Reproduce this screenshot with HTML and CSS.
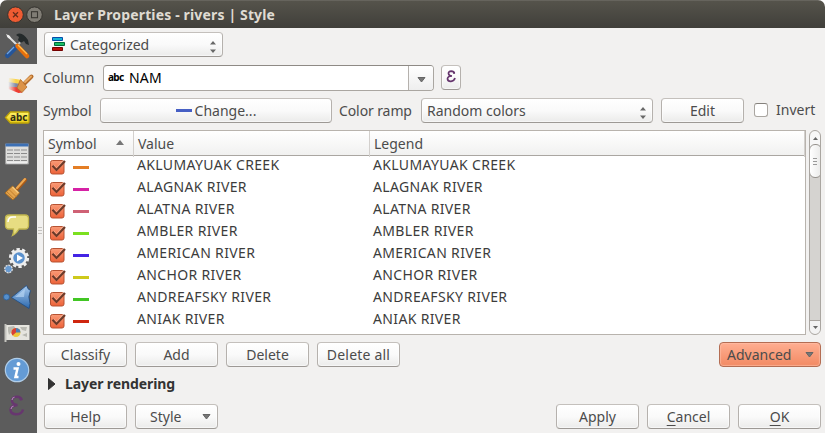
FILE: index.html
```html
<!DOCTYPE html>
<html lang="en">
<head>
<meta charset="utf-8">
<title>Layer Properties - rivers | Style</title>
<link rel="stylesheet" href="styles.css">
</head>
<body>
<svg class="defs" width="0" height="0">
  <defs>
    <linearGradient id="org" x1="0" y1="0" x2="0" y2="1"><stop offset="0" stop-color="#f99b78"/><stop offset="1" stop-color="#ed6238"/></linearGradient>
    <linearGradient id="blu" x1="0" y1="0" x2="0" y2="1"><stop offset="0" stop-color="#a9cbef"/><stop offset="1" stop-color="#2c68ad"/></linearGradient>
    <linearGradient id="yel" x1="0" y1="0" x2="0" y2="1"><stop offset="0" stop-color="#fff36c"/><stop offset="1" stop-color="#e9cb16"/></linearGradient>
    <linearGradient id="fade" x1="0" y1="0" x2="1" y2="0"><stop offset="0" stop-color="#f2f1f0"/><stop offset="1" stop-color="#f2f1f0" stop-opacity="0"/></linearGradient>
    <symbol id="check" viewBox="0 0 18 16">
      <rect x="1.5" y="1.500" width="13.500" height="13.500" rx="2" fill="url(#org)" stroke="#b65333"/>
      <path d="M4 6.500l3.500 4 7.500-8.500" fill="none" stroke="#ffc4aa" stroke-width="3" opacity=".5"/>
      <path d="M3.500 6.700l4 4.300 8.500-9" fill="none" stroke="#6b3a29" stroke-width="2.200"/>
    </symbol>
    <symbol id="updown" viewBox="0 0 6 12"><path d="M0 3.500L3 0l3 3.500zM0 8.500h6L3 12z" fill="#686868"/></symbol>
    <symbol id="down" viewBox="0 0 9 6"><path d="M1 .5h7L4.500 5z" fill="#777" stroke="#656565"/></symbol>
  </defs>
</svg>
<div class="window">
  <header class="titlebar">
    <svg class="controls" width="40" height="20" viewBox="0 0 40 20">
      <circle cx="10.500" cy="9.700" r="7.800" fill="#ee5b32" stroke="#35332e"/>
      <path d="M8 7.200l5 5M13 7.200l-5 5" stroke="#642c1a" stroke-width="1.300"/>
      <circle cx="29.500" cy="9.700" r="7.800" fill="#807d75" stroke="#35332e"/>
      <rect x="26.500" y="6.700" width="6" height="6" fill="none" stroke="#393732" stroke-width="1.100"/>
    </svg>
    <h1>Layer Properties - rivers | Style</h1>
  </header>
  <div class="body">
    <nav class="sidebar">
      <div class="tab"><svg viewBox="0 0 37 36">
        <path d="M7.500 7.500L20 20" stroke="#dedede" stroke-width="2"/><path d="M6 6l4 2 1 3-3-1z" fill="#eee"/>
        <path d="M16 19L7.500 27.500" stroke="#24559a" stroke-width="5" stroke-linecap="round"/><path d="M14 19l-7 7" stroke="#75a4dc" stroke-width="1.200"/>
        <path d="M17.500 17l5-5" stroke="#c7c7c7" stroke-width="2"/>
        <path d="M16 7c4-3 8-1 12 5l1 5-3-1-2-3-3 2-3-3 1-3z" fill="#242a2b"/>
        <path d="M17.500 18l9.500 10" stroke="#e66f0c" stroke-width="4.500" stroke-linecap="round"/><path d="M18 17l9 9" stroke="#ffc052" stroke-width="1.300"/>
      </svg></div>
      <div class="tab active"><svg viewBox="0 0 37 36">
        <path d="M9 14l13 2-2 5-12-2z" fill="#fbd344"/><path d="M8.500 18l12 2-3 5-9-2z" fill="#8089a5"/><path d="M8.500 22.500l11 1 3 5-4 .5-10-4z" fill="#ee3d32"/>
        <path d="M8 13h8v16H8z" fill="url(#fade)"/>
        <path d="M25 19l6.500-6.500" stroke="#b66d2c" stroke-width="4" stroke-linecap="round"/><path d="M25 18l6-5.500" stroke="#e9aa63" stroke-width="2" stroke-linecap="round"/>
        <path d="M20.500 15.500l6.500 7.500-5 5.500-5-4.500z" fill="#dc9348" stroke="#b46c2b" stroke-width=".8"/>
      </svg></div>
      <div class="tab"><svg viewBox="0 0 37 36">
        <path d="M10.500 12h17.500q1 0 1 1v9q0 1-1 1H10.500l-5-5.500z" fill="url(#yel)" stroke="#c0a506" stroke-width="1.300"/>
        <text x="10" y="21" class="abc-tag">abc</text>
      </svg></div>
      <div class="tab"><svg viewBox="0 0 37 36">
        <path d="M5.500 8h23v20h-23z" fill="#dededc" stroke="#999"/><path d="M5.500 7.500h23v3h-23z" fill="#3c70b5"/>
        <path d="M7 14h20M7 17.500h20M7 21h20M7 24.500h20" stroke="#8b8b8b" stroke-width="1.200" stroke-dasharray="6 1"/>
        <path d="M7 26.500h20" stroke="#eee" stroke-width="2"/>
      </svg></div>
      <div class="tab"><svg viewBox="0 0 37 36">
        <path d="M17 17l8-9" stroke="#a95a18" stroke-width="4" stroke-linecap="round"/><path d="M17 16l8-9" stroke="#eda953" stroke-width="2" stroke-linecap="round"/>
        <path d="M12.500 14l7 7-6.500 7-8-7z" fill="#e3a44d" stroke="#a66a20"/><path d="M7 20l7 6.500M9.500 18l7 7" stroke="#bf7e2e"/><path d="M12.500 15l6 6" stroke="#f5ca80" stroke-width="1.500"/>
      </svg></div>
      <div class="tab"><svg viewBox="0 0 37 36">
        <path d="M9 7h16q3.500 0 3.500 3.500v7q0 3.500-3.500 3.500h-6q-3 5-6.500 6.500 1.500-3 1-6.500H9q-3.500 0-3.500-3.500v-7Q5.500 7 9 7z" fill="#e7dd82" stroke="#c1b64e" stroke-width="1.300"/>
        <path d="M8 14q0-5 5-5h3" fill="none" stroke="#fff" stroke-width="1.500"/>
      </svg></div>
      <div class="tab"><svg viewBox="0 0 37 36">
        <circle cx="19" cy="14" r="8.800" fill="none" stroke="#eee" stroke-width="2.600" stroke-dasharray="3.300 2.230"/>
        <circle cx="19" cy="14" r="7" fill="#5b91cd" stroke="#eee" stroke-width="2.500"/><path d="M17 10.500l6 3.500-6 3.500z" fill="#fff"/>
        <circle cx="8.500" cy="25" r="3.700" fill="#5b91cd" stroke="#ddd" stroke-width="1.500" stroke-dasharray="2 .8"/><circle cx="8.500" cy="25" r="2.800" fill="#699bd1"/>
      </svg></div>
      <div class="tab"><svg viewBox="0 0 37 36">
        <path d="M11.500 17.500l15-12q1 4 4 5-3 6-.500 13l-1 5z" fill="url(#blu)" stroke="#1d4d86" stroke-width=".8"/><path d="M15 17l10-8-1 8z" fill="#bad7f4" opacity=".65"/>
        <circle cx="6.500" cy="17" r="3" fill="#568fcb" stroke="#285d9a" stroke-width=".8"/>
      </svg></div>
      <div class="tab"><svg viewBox="0 0 37 36">
        <path d="M5.500 9h24v15h-24z" fill="#e6e5df"/><path d="M8 11l6-1 2 3-4 2-3 4-1-4zM20 11l7 0-1 4-4-1zM22 19l5-2 0 4z" fill="#b9b9b2"/>
        <path d="M5.500 8v18" stroke="#c5c4bf" stroke-width="2"/>
        <circle cx="16" cy="16.500" r="4.500" fill="#edc63b"/><path d="M16 16.500V12a4.500 4.500 0 0 0-3.500 7.500z" fill="#d84037"/><path d="M16 16.500V12a4.500 4.500 0 0 1 4.500 4.500z" fill="#4d7db5"/>
      </svg></div>
      <div class="tab"><svg viewBox="0 0 37 36">
        <circle cx="17" cy="18" r="11.700" fill="#649bd5" stroke="#b1cee9" stroke-width="1.200"/>
        <circle cx="18.500" cy="12" r="2" fill="#fff"/><path d="M13.500 16.500h4l-2 8.500h3" fill="none" stroke="#fff" stroke-width="2.500"/>
      </svg></div>
      <div class="tab"><svg viewBox="0 0 37 36">
        <path d="M21.500 12q-1-3.500-5-3.200-5 .5-4.500 4.200.5 3.500 5.500 4-7 .5-7 5 .5 4.500 6.500 4.200 5-.2 6-4.700" fill="none" stroke="#67366f" stroke-width="2.400"/>
        <circle cx="21" cy="11" r="1.600" fill="#67366f"/><path d="M12 12q.5-2.500 2.500-3M11 21q.5-2.500 2.500-3" fill="none" stroke="#b18ab6" stroke-width="1.200"/>
      </svg></div>
    </nav>
    <main class="content">
      <div class="splitter"><i></i><i></i><i></i></div>
      <div class="row">
        <div class="btn combo renderer">
          <svg width="14" height="15" viewBox="0 0 14 15"><g stroke-width="1"><path d="M.500.500h10v3H.500z" fill="#13b3d5" stroke="#074aa9"/><path d="M2.500 5.500h10v3h-10z" fill="#18bd63" stroke="#006638"/><path d="M.500 10.500h10v3H.500z" fill="#bd0c07" stroke="#740000"/></g></svg>
          <span>Categorized</span><svg class="ud"><use href="#updown"/></svg>
        </div>
      </div>
      <div class="row column-row">
        <label>Column</label>
        <div class="field"><b>abc</b><span>NAM</span><div class="drop"><svg class="dn"><use href="#down"/></svg></div></div>
        <div class="btn expr"><svg width="12" height="15" viewBox="0 0 12 15"><path d="M9.300 4.500Q9 2.100 6.300 2.100 3.300 2.300 3.500 4.600 3.800 6.800 7 7 2.500 7.200 2.500 9.800 2.800 12.500 6 12.300 9.200 12 10 9" fill="none" stroke="#66366e" stroke-width="1.700"/><circle cx="9" cy="3.800" r="1.100" fill="#66366e"/></svg></div>
      </div>
      <div class="row symbol-row">
        <label>Symbol</label>
        <div class="btn change"><i class="swatch"></i><span>Change...</span></div>
        <label class="ramp-label">Color ramp</label>
        <div class="btn combo ramp"><span>Random colors</span><svg class="ud"><use href="#updown"/></svg></div>
        <div class="btn edit">Edit</div>
        <div class="checkbox"></div><label class="invert">Invert</label>
      </div>
      <div class="table-area">
        <div class="table">
          <div class="thead"><div>Symbol<svg class="sort" viewBox="0 0 8 5"><path d="M0 5h8L4 0z" fill="#777"/></svg></div><div>Value</div><div>Legend</div></div>
          <div class="tr"><div><svg class="check"><use href="#check"/></svg><i class="swatch c1"></i></div><div>AKLUMAYUAK CREEK</div><div>AKLUMAYUAK CREEK</div></div>
          <div class="tr"><div><svg class="check"><use href="#check"/></svg><i class="swatch c2"></i></div><div>ALAGNAK RIVER</div><div>ALAGNAK RIVER</div></div>
          <div class="tr"><div><svg class="check"><use href="#check"/></svg><i class="swatch c3"></i></div><div>ALATNA RIVER</div><div>ALATNA RIVER</div></div>
          <div class="tr"><div><svg class="check"><use href="#check"/></svg><i class="swatch c4"></i></div><div>AMBLER RIVER</div><div>AMBLER RIVER</div></div>
          <div class="tr"><div><svg class="check"><use href="#check"/></svg><i class="swatch c5"></i></div><div>AMERICAN RIVER</div><div>AMERICAN RIVER</div></div>
          <div class="tr"><div><svg class="check"><use href="#check"/></svg><i class="swatch c6"></i></div><div>ANCHOR RIVER</div><div>ANCHOR RIVER</div></div>
          <div class="tr"><div><svg class="check"><use href="#check"/></svg><i class="swatch c7"></i></div><div>ANDREAFSKY RIVER</div><div>ANDREAFSKY RIVER</div></div>
          <div class="tr"><div><svg class="check"><use href="#check"/></svg><i class="swatch c8"></i></div><div>ANIAK RIVER</div><div>ANIAK RIVER</div></div>
        </div>
        <div class="scrollbar">
          <svg width="5" height="3" viewBox="0 0 5 3"><path d="M0 3h5L2.500 0z" fill="#666"/></svg>
          <div class="thumb"><i></i><i></i><i></i></div>
          <div class="end"><svg width="5" height="3" viewBox="0 0 5 3"><path d="M0 0h5L2.500 3z" fill="#666"/></svg></div>
        </div>
      </div>
      <div class="row actions">
        <div class="btn">Classify</div><div class="btn">Add</div><div class="btn">Delete</div><div class="btn wide">Delete all</div>
        <div class="btn menu advanced"><span>Advanced</span><svg class="dn"><use href="#down"/></svg></div>
      </div>
      <div class="group"><svg width="8" height="12" viewBox="0 0 8 12"><path d="M.500.500L7 6 .500 11.500z" fill="#333" stroke="#333"/></svg><b>Layer rendering</b></div>
      <div class="row actions">
        <div class="btn">Help</div><div class="btn menu"><span>Style</span><svg class="dn"><use href="#down"/></svg></div>
        <div class="btn apply">Apply</div><div class="btn"><span><u>C</u>ancel</span></div><div class="btn"><span><u>O</u>K</span></div>
      </div>
    </main>
  </div>
</div>
</body>
</html>
```
FILE: styles.css
```css
* { box-sizing: border-box; }
body { margin: 0; background: #fff; font: 14px/20px "Noto Sans", "Open Sans", sans-serif; color: #4c4c4c; }
.defs { position: absolute; }
.window { width: 825px; height: 433px; overflow: hidden; border-radius: 7px 7px 0 0; background: #f2f1f0; }
.titlebar { height: 28px; display: flex; align-items: center; padding-left: 5px; border-top: 1px solid #66645d; background: linear-gradient(#55534b, #403f3a); }
.controls { flex: none; }
h1 { margin: 0 0 0 9px; font-size: 14px; line-height: 20px; font-weight: 700; letter-spacing: .15px; color: #dfdbd2; white-space: pre; }
.body { display: flex; height: 405px; }
.sidebar { width: 37px; flex: none; background: #5c5c5c; }
.tab { height: 36px; }
.tab svg { display: block; width: 37px; height: 36px; }
.tab.active { background: #f2f1f0; }
.abc-tag { font: bold 10px "Noto Sans", sans-serif; fill: #2f2e18; }
.content { position: relative; flex: 1; padding: 4px 4px 4px 7px; min-width: 0; }
.splitter { position: absolute; left: 1px; top: 199px; width: 4px; display: grid; gap: 2px; }
.splitter i { height: 1px; background: #c5c3c0; }
.row { display: flex; align-items: center; height: 25px; }
.btn { width: 83px; height: 25px; flex: none; display: flex; align-items: center; justify-content: center; border: 1px solid #b5b1ad; border-top-color: #c4c0bc; border-bottom-color: #9d9995; border-radius: 4px; background: linear-gradient(#fff, #fafafa 50%, #ebebea); box-shadow: inset 0 0 1px 1px #fff9; white-space: nowrap; }
.combo { justify-content: flex-start; }
.combo .ud { margin-left: auto; margin-right: 6px; margin-top: 4px; }
.ud { width: 6px; height: 12px; }
.dn { width: 9px; height: 6px; }
.renderer { width: 179px; padding-left: 7px; }
.renderer span { margin-left: 4px; letter-spacing: 0; }
.column-row { margin-top: 8px; }
label { width: 59px; flex: none; margin-left: -1px; white-space: nowrap; }
.field { width: 331px; height: 26px; display: flex; align-items: center; margin-left: 1px; padding-left: 4px; border: 1px solid #aaa6a1; border-top-color: #8e8a85; border-radius: 4px; background: #fff; color: #000; overflow: hidden; }
.field b { width: 21px; font-size: 10px; letter-spacing: -.7px; position: relative; top: -1px; }
.field span { letter-spacing: .2px; }
.drop { margin-left: auto; width: 25px; height: 24px; display: flex; align-items: center; justify-content: center; border-left: 1px solid #b5b1ad; background: linear-gradient(#fff, #eee); }
.drop .dn { margin-top: 4px; }
.expr { width: 20px; margin-left: 7px; }
.expr svg { margin-top: -2px; }
.symbol-row { margin-top: 8px; }
.symbol-row > label:first-child { width: 57px; }
.change { width: 232px; gap: 3px; }
.swatch { display: block; width: 16px; height: 3px; flex: none; background: #465fc4; }
.ramp-label { width: 82px; margin-left: 7px; letter-spacing: -.1px; }
.ramp { width: 232px; padding-left: 5px; }
.edit { margin-left: 8px; }
.checkbox { width: 14px; height: 14px; flex: none; margin: -2px 8px 0 10px; border: 1px solid #aaa6a1; border-top-color: #85817c; border-radius: 3px; background: #fff; }
.invert { width: 45px; margin: -2px 0 0; }
.table-area { display: flex; gap: 3px; height: 205px; margin: 7px 0 0 -1px; }
.table { width: 763px; flex: none; border: 1px solid #b8b3ad; background: #fff; overflow: hidden; }
.thead, .tr { display: grid; grid-template-columns: 90px 236px 1fr; }
.thead { height: 25px; line-height: 26px; background: linear-gradient(#fff, #f1f1f0); border-bottom: 1px solid #aaa6a1; }
.thead > div { padding-left: 4px; border-right: 1px solid #d3d0cd; }
.sort { width: 8px; height: 5px; float: right; margin: 9px 9px 0 0; }
.tr { height: 22px; line-height: 18px; letter-spacing: .35px; color: #3c3c3c; }
.tr > div { padding-left: 3px; white-space: nowrap; }
.tr > div:first-child { display: flex; align-items: center; gap: 6px; padding-left: 5px; }
.check { width: 18px; height: 16px; margin-top: -1px; }
.c1 { background: #e47e25; } .c2 { background: #d622a5; } .c3 { background: #cf6175; } .c4 { background: #7be020; }
.c5 { background: #4324e5; } .c6 { background: #cec91c; } .c7 { background: #42c624; } .c8 { background: #cf260f; }
.scrollbar { width: 13px; height: 205px; display: flex; flex-direction: column; align-items: center; padding-top: 6px; border: 1px solid #aaa6a1; border-radius: 7px; background: linear-gradient(#f7f7f7 25px, #d5d3d0 25px); overflow: hidden; }
.scrollbar svg { flex: none; }
.thumb { width: 13px; height: 34px; flex: none; margin-top: 4px; display: grid; align-content: center; justify-content: center; gap: 2px; border: 1px solid #96928d; border-radius: 6px; background: linear-gradient(90deg, #fff, #eaeae9); }
.thumb i { width: 4px; height: 1px; background: #999; }
.end { width: 13px; height: 14px; flex: none; margin-top: auto; display: grid; place-items: center; border-top: 1px solid #aaa6a1; border-radius: 0 0 6px 6px; background: #f3f3f3; }
.actions { gap: 8px; margin-top: 7px; }
.wide { letter-spacing: .2px; }
.menu { justify-content: space-between; padding: 0 6px 0 14px; }
.advanced { width: 102px; margin-left: auto; padding-left: 7px; border-color: #b46d53; background: linear-gradient(#ffae91, #f28a63); box-shadow: inset 0 0 1px 1px #ffc3ab99; }
.group { height: 23px; margin-top: 5px; padding-left: 4px; display: flex; align-items: center; gap: 9px; color: #333; }
.group b { letter-spacing: -.1px; }
.group + .actions { margin-top: 9px; }
.apply { margin-left: auto; }
u { text-underline-offset: 3px; text-decoration-thickness: 1px; }
```
